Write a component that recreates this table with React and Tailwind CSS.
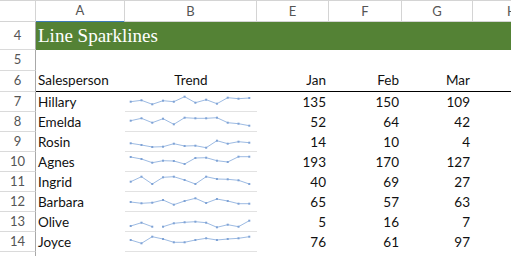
const ROWS = [
  { n: 7, name: "Hillary", jan: 135, feb: 150, mar: 109, pts: [10.7, 9.3, 13.3, 9.7, 10.7, 5.7, 11.7, 8.7, 12.7, 6.7, 7.7, 7] },
  { n: 8, name: "Emelda", jan: 52, feb: 64, mar: 42, pts: [9.7, 7.3, 11.7, 7.7, 13.3, 6.7, 7.3, 7.3, 6.7, 11.7, 12.7, 14.7] },
  { n: 9, name: "Rosin", jan: 14, feb: 10, mar: 4, pts: [12.3, 14, 16, 15.7, 12.7, 15, 14.7, 16.7, 9.7, 12.7, 10.7, 11.7] },
  { n: 10, name: "Agnes", jan: 193, feb: 170, mar: 127, pts: [6, 8, 11.7, 9.7, 10, 13, 7, 6.7, 9.7, 11, 5.7, 5.7] },
  { n: 11, name: "Ingrid", jan: 40, feb: 69, mar: 27, pts: [10.7, 5.7, 13, 6.3, 5.7, 9, 13, 5.7, 8, 8.3, 9.3, 13] },
  { n: 12, name: "Barbara", jan: 65, feb: 57, mar: 63, pts: [11, 12.3, 11.7, 9, 13.7, 10, 7.3, 12, 8, 10, 12.7, 12.7] },
  { n: 13, name: "Olive", jan: 5, feb: 16, mar: 7, gap: 2, pts: [15, 11.7, 15.7, 15.7, 12.3, 11.3, 10.7, 11.7, 16.3, 13.7, 15.7, 9.7] },
  { n: 14, name: "Joyce", jan: 76, feb: 61, mar: 97, pts: [9, 12.3, 5.7, 8, 11.3, 11.3, 9, 7.3, 9, 8, 7.3, 5.7] },
];

const COLS = "grid grid-cols-[36px_89px_132px_72px_73px_71px_1fr]";
const font = { fontFamily: "Lato, 'Open Sans', sans-serif" };

function Sparkline({ pts, gap }) {
  const xy = pts.map((y, i) => [5.7 + i * 10.78, y - 1]);
  const segs = [];
  for (let i = 0; i < xy.length - 1; i++) {
    if (i === gap) continue;
    segs.push(`M${xy[i][0]} ${xy[i][1]}L${xy[i + 1][0]} ${xy[i + 1][1]}`);
  }
  return (
    <svg width="132" height="19" className="block">
      <path d={segs.join("")} stroke="#9dbbe3" strokeWidth="1" fill="none" />
      {xy.map(([x, y], i) => (
        <rect key={i} x={x - 1} y={y - 1} width="2" height="2" fill="#7fa3d6" />
      ))}
    </svg>
  );
}

function RowNum({ children, h }) {
  return (
    <div
      className={`${h} flex items-center justify-center border-r border-b border-r-[#a8a8a8] border-b-[#dadada] text-[13px] text-[#555]`}
    >
      {children}
    </div>
  );
}

export default function App() {
  return (
    <div className="w-[511px] h-[256px] overflow-hidden bg-white text-[13.5px] text-[#111]" style={font}>
      {/* column letters */}
      <div className={`${COLS} h-[22px] border-t border-b border-[#d4d4d4] text-[13px] text-[#555]`}>
        <div className="border-r border-[#d4d4d4]" />
        <div className="flex items-center justify-center border-r border-[#d4d4d4] border-b-2 border-b-[#3d7ab8]">A</div>
        <div className="flex items-center justify-center border-r border-[#d4d4d4]">B</div>
        <div className="flex items-center justify-center border-r border-[#d4d4d4]">E</div>
        <div className="flex items-center justify-center border-r border-[#d4d4d4]">F</div>
        <div className="flex items-center justify-center border-r border-[#d4d4d4]">G</div>
        <div className="flex items-center justify-center pl-[34px]">H</div>
      </div>

      {/* row 4 title */}
      <div className="flex">
        <div className="w-[36px] shrink-0">
          <RowNum h="h-[28px]">4</RowNum>
        </div>
        <div
          className="flex-1 h-[28px] bg-[#548235] text-white text-[19px] pl-[2px] flex items-center"
          style={{ fontFamily: "'Liberation Serif', serif" }}
        >
          Line Sparklines
        </div>
      </div>

      {/* row 5 */}
      <div className={COLS}>
        <RowNum h="h-[21px]">5</RowNum>
      </div>

      {/* row 6 header */}
      <div className={COLS}>
        <RowNum h="h-[21px]">6</RowNum>
        <div className="h-[21px] border-b border-black pl-[2px] flex items-end pb-[1px]">Salesperson</div>
        <div className="h-[21px] border-b border-black flex items-end justify-center pb-[1px]">Trend</div>
        <div className="h-[21px] border-b border-black flex items-end justify-end pr-[3px] pb-[1px]">Jan</div>
        <div className="h-[21px] border-b border-black flex items-end justify-end pr-[3px] pb-[1px]">Feb</div>
        <div className="h-[21px] border-b border-black flex items-end justify-end pr-[3px] pb-[1px]">Mar</div>
        <div className="h-[21px] border-b border-black" />
      </div>

      {ROWS.map((r) => (
        <div key={r.n} className={COLS}>
          <RowNum h="h-[20px]">{r.n}</RowNum>
          <div className="h-[20px] pl-[2px] flex items-center">{r.name}</div>
          <div className="h-[20px] border-b border-[#e2e2e2]">
            <Sparkline pts={r.pts} gap={r.gap} />
          </div>
          <div className="h-[20px] flex items-center justify-end pr-[3px]">{r.jan}</div>
          <div className="h-[20px] flex items-center justify-end pr-[3px]">{r.feb}</div>
          <div className="h-[20px] flex items-center justify-end pr-[3px]">{r.mar}</div>
          <div />
        </div>
      ))}
      <div className={COLS}>
        <RowNum h="h-[20px]" />
      </div>
    </div>
  );
}
